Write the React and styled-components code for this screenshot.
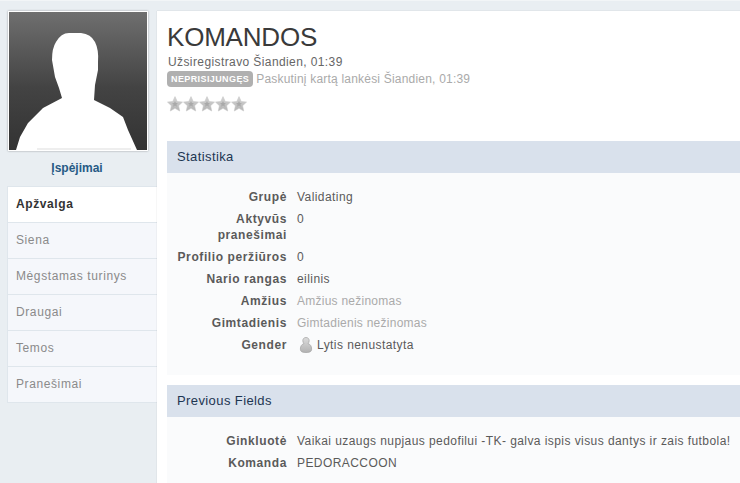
import styled, { createGlobalStyle } from "styled-components";

const GlobalStyle = createGlobalStyle`
  html, body {
    margin: 0;
    padding: 0;
    height: 100%;
    overflow: hidden;
    background: #e9eef2;
  }
  body {
    font-family: "Liberation Sans", Arial, sans-serif;
    font-size: 12px;
    color: #444;
  }
`;

const Page = styled.div`
  display: flex;
  align-items: flex-start;
  width: 740px;
  height: 483px;
  overflow: hidden;
  padding-top: 10px;
  box-sizing: border-box;
  border-top: 1px solid #f2f5f7;
`;

const Sidebar = styled.aside`
  flex: 0 0 150px;
  margin-left: 7px;
`;

const PhotoFrame = styled.div`
  width: 138px;
  height: 138px;
  margin-left: 1px;
  border: 1px solid #fff;
  box-shadow: 0 0 2px rgba(0, 0, 0, 0.35);
  overflow: hidden;
  line-height: 0;
`;

const WarningLink = styled.a`
  display: block;
  width: 138px;
  margin: 9px 0 0 1px;
  text-align: center;
  font-size: 12px;
  line-height: 16px;
  font-weight: bold;
  color: #265a85;
`;

const Tabs = styled.ul`
  list-style: none;
  margin: 10px 0 0;
  padding: 0;
  border: 1px solid #dfe6ec;
  border-right: 0;
  border-top: 0;
`;

const Tab = styled.li`
  height: 35px;
  line-height: 35px;
  padding-left: 8px;
  border-top: 1px solid #dfe6ec;
  background: ${(p) => (p.$active ? "#fff" : "#f5f7fb")};
  color: ${(p) => (p.$active ? "#333" : "#8a8a8a")};
  font-weight: ${(p) => (p.$active ? "bold" : "normal")};
  font-size: 12px;
  letter-spacing: 0.6px;
`;

const Main = styled.main`
  flex: 1;
  min-width: 0;
  height: 473px;
  background: #fff;
  padding: 0 0 0 10px;
  box-shadow: 0 0 1px rgba(0, 0, 0, 0.2);
`;

const Title = styled.h1`
  margin: 11px 0 0;
  font-size: 26px;
  line-height: 30px;
  font-weight: normal;
  color: #3a3a3a;
  letter-spacing: -0.2px;
`;

const Registered = styled.div`
  margin: 2px 0 0 1px;
  line-height: 16px;
  color: #666;
  letter-spacing: 0.4px;
`;

const StatusLine = styled.div`
  display: flex;
  align-items: center;
  gap: 3px;
  margin: 1px 0 0 0;
  height: 16px;
  color: #aaa;
  letter-spacing: 0.2px;
`;

const Badge = styled.span`
  height: 16px;
  line-height: 16px;
  padding: 0 4px;
  border-radius: 4px;
  background: #b0b0b0;
  color: #fff;
  font-size: 9px;
  font-weight: bold;
  letter-spacing: 0.4px;
`;

const Stars = styled.div`
  display: flex;
  margin: 9px 0 0;
  height: 16px;
`;

const SectionTitle = styled.h2`
  height: 32px;
  margin: ${(p) => p.$top}px 0 0;
  padding-left: 10px;
  background: #d9e1ec;
  color: #1d3652;
  font-size: 13px;
  line-height: 32px;
  font-weight: normal;
  letter-spacing: 0.4px;
`;

const SectionBody = styled.dl`
  display: grid;
  grid-template-columns: 120px 1fr;
  column-gap: 10px;
  row-gap: 6px;
  align-content: start;
  margin: 0;
  height: ${(p) => p.$height}px;
  padding-top: 16px;
  box-sizing: border-box;
  background: #fafbfc;
  line-height: 16px;
`;

const Label = styled.dt`
  text-align: right;
  font-weight: bold;
  color: #5a5a5a;
  letter-spacing: 0.6px;
`;

const Value = styled.dd`
  margin: 0;
  display: flex;
  align-items: center;
  gap: 4px;
  white-space: nowrap;
  align-self: start;
  height: 16px;
  color: ${(p) => (p.$muted ? "#aaa" : "#5a5a5a")};
  letter-spacing: ${(p) => (p.$muted ? "0.25px" : "0.43px")};
`;

const GenderWrap = styled.span`
  display: flex;
  margin-left: 2px;
`;

const Star = () => (
  <svg width="16" height="16" viewBox="0 0 16 16">
    <defs>
      <linearGradient id="star" x1="0" y1="0" x2="0" y2="1">
        <stop offset="0" stopColor="#d4d4d4" />
        <stop offset="1" stopColor="#b4b4b4" />
      </linearGradient>
    </defs>
    <path
      d="M8 .6l2.2 4.9 5.3.6-3.9 3.6 1.1 5.3L8 12.3l-4.7 2.7 1.1-5.3L.5 6.1l5.3-.6z"
      fill="url(#star)"
      stroke="#c8c8c8"
      strokeWidth=".6"
    />
    <path d="M8 5l.9 2 2.1.2-1.6 1.4.5 2.1L8 9.6l-1.9 1.1.5-2.1L5 7.2 7.1 7z" fill="#a9a9a9" />
  </svg>
);

const Silhouette = () => (
  <svg width="138" height="138" viewBox="0 0 138 138">
    <defs>
      <linearGradient id="bg" x1="0" y1="0" x2="0" y2="1">
        <stop offset="0" stopColor="#6f6f6f" />
        <stop offset="0.55" stopColor="#434343" />
        <stop offset="1" stopColor="#333" />
      </linearGradient>
    </defs>
    <rect width="138" height="138" fill="url(#bg)" />
    <path
      d="M7 138 L11 125 L19 111 L34 96 L53 86 L50 76 L46 65 L43 48 Q43 36 47 30 Q52 21 60 21 L72 21 Q82 22 86 30 Q90 38 89 50 L89 58 L86 73 L85 88 L101 96 L114 105 L119 118 L128 138 Z"
      fill="#fff"
    />
    <line x1="28" y1="137" x2="122" y2="137" stroke="#ddd" />
  </svg>
);

const GenderIcon = () => (
  <svg width="14" height="18" viewBox="0 0 14 18">
    <defs>
      <linearGradient id="person" x1="0" y1="0" x2="0" y2="1">
        <stop offset="0" stopColor="#dcdcdc" />
        <stop offset="1" stopColor="#b2b2b2" />
      </linearGradient>
    </defs>
    <path
      d="M7 1.5c2 0 3.2 1.4 3.2 3.2 0 1.2-.5 2.2-1.2 2.8 2.3.8 3.6 2.6 3.6 5.5 0 2-.8 3.5-5.6 3.5s-5.6-1.5-5.6-3.5c0-2.9 1.3-4.7 3.6-5.5-.7-.6-1.2-1.6-1.2-2.8C3.8 2.9 5 1.5 7 1.5z"
      fill="url(#person)"
      stroke="#a0a0a0"
      strokeWidth=".7"
    />
  </svg>
);

const tabs = ["Apžvalga", "Siena", "Mėgstamas turinys", "Draugai", "Temos", "Pranešimai"];

export default function App() {
  return (
    <Page>
      <GlobalStyle />
      <Sidebar>
        <PhotoFrame>
          <Silhouette />
        </PhotoFrame>
        <WarningLink>Įspėjimai</WarningLink>
        <Tabs>
          {tabs.map((t, i) => (
            <Tab key={t} $active={i === 0}>
              {t}
            </Tab>
          ))}
        </Tabs>
      </Sidebar>
      <Main>
        <Title>KOMANDOS</Title>
        <Registered>Užsiregistravo Šiandien, 01:39</Registered>
        <StatusLine>
          <Badge>NEPRISIJUNGĘS</Badge>
          Paskutinį kartą lankėsi Šiandien, 01:39
        </StatusLine>
        <Stars>
          <Star />
          <Star />
          <Star />
          <Star />
          <Star />
        </Stars>
        <SectionTitle $top={29}>Statistika</SectionTitle>
        <SectionBody $height={202}>
          <Label>Grupė</Label>
          <Value>Validating</Value>
          <Label>Aktyvūs pranešimai</Label>
          <Value>0</Value>
          <Label>Profilio peržiūros</Label>
          <Value>0</Value>
          <Label>Nario rangas</Label>
          <Value>eilinis</Value>
          <Label>Amžius</Label>
          <Value $muted>Amžius nežinomas</Value>
          <Label>Gimtadienis</Label>
          <Value $muted>Gimtadienis nežinomas</Value>
          <Label>Gender</Label>
          <Value>
            <GenderWrap>
              <GenderIcon />
            </GenderWrap>
            Lytis nenustatyta
          </Value>
        </SectionBody>
        <SectionTitle $top={10}>Previous Fields</SectionTitle>
        <SectionBody $height={66}>
          <Label>Ginkluotė</Label>
          <Value>Vaikai uzaugs nupjaus pedofilui -TK- galva ispis visus dantys ir zais futbola!</Value>
          <Label>Komanda</Label>
          <Value>PEDORACCOON</Value>
        </SectionBody>
      </Main>
    </Page>
  );
}
